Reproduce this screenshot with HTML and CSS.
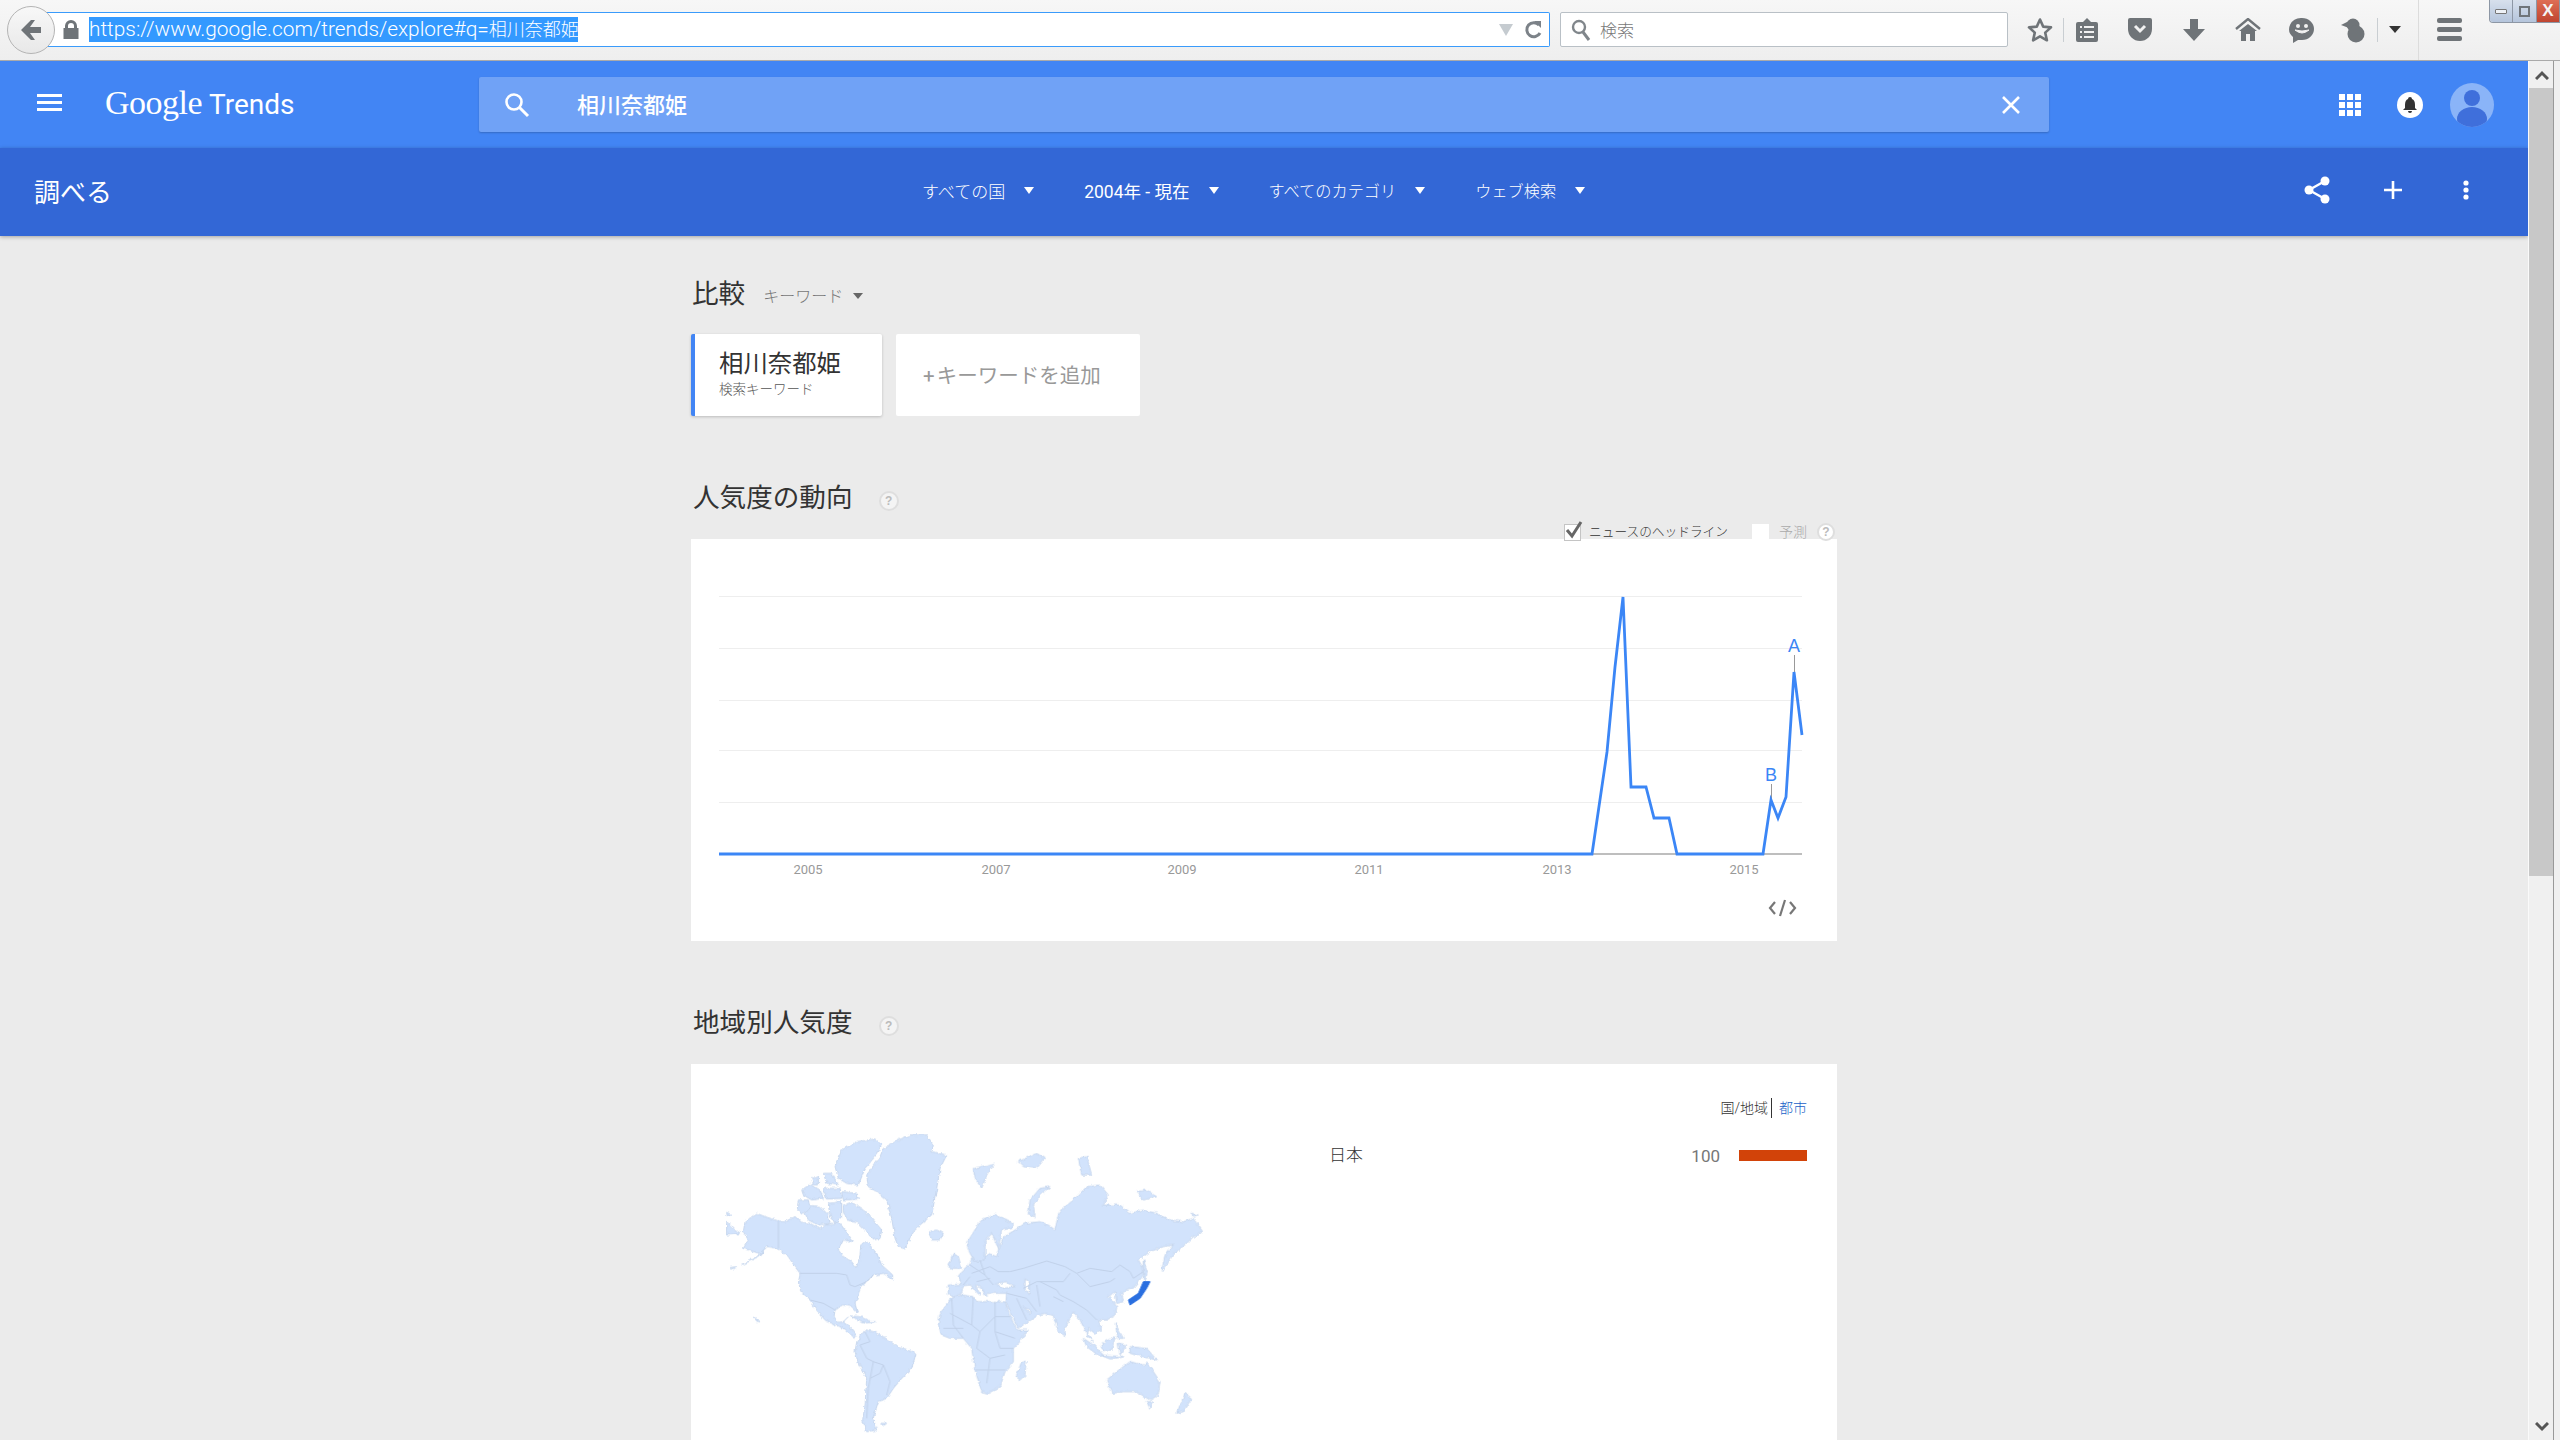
FILE: index.html
```html
<!DOCTYPE html>
<html>
<head>
    <title>Google Trends</title>
    <meta name="viewport" content="width=device-width, initial-scale=1.0">
    <link rel="stylesheet" href="styles.css">
</head>
<body>
    <div class="browser-bar">
        <div class="back-btn">
            <svg width="24" height="24" viewBox="0 0 24 24"><path d="M2 12 L12 2 L16 2 L11 9 L22 9 L22 15 L11 15 L16 22 L12 22 Z" fill="#6f7478"/></svg>
        </div>
        <div class="address-bar">
            <svg class="lock" width="18" height="20" viewBox="0 0 18 20"><path d="M3 8V6a6 6 0 0 1 12 0v2h1.5v11h-15V8Zm3 0h6V6a3 3 0 0 0-6 0Z" fill="#6f7478"/></svg>
            <span class="url">https://www.google.com/trends/explore#q=<span class="url-cjk">相川奈都姫</span></span>
            <div class="address-end">
                <svg width="14" height="12" viewBox="0 0 14 12"><path d="M0 0H14L7 12Z" fill="#c5cbd0"/></svg>
                <svg width="18" height="20" viewBox="0 0 18 20"><path d="M15 5A7 7 0 1 0 16 13" fill="none" stroke="#7c8288" stroke-width="3"/><path d="M10 1H17V8Z" fill="#7c8288"/></svg>
            </div>
        </div>
        <div class="browser-search">
            <svg width="20" height="22" viewBox="0 0 20 22"><circle cx="8" cy="8" r="6" fill="none" stroke="#80868b" stroke-width="2.4"/><path d="M12 13L18 21" stroke="#80868b" stroke-width="3"/></svg>
            <span>検索</span>
        </div>
        <div class="tools">
            <div class="tool tool-star">
                <svg width="26" height="26" viewBox="0 0 26 26"><path d="M13 2.5L16.2 9.6L24 10.4L18.2 15.6L19.9 23.3L13 19.3L6.1 23.3L7.8 15.6L2 10.4L9.8 9.6Z" fill="none" stroke="#6f7478" stroke-width="2.6" stroke-linejoin="round"/></svg>
            </div>
            <div class="tool-sep"></div>
            <div class="tool tool-clip">
                <svg width="24" height="26" viewBox="0 0 24 26"><path d="M3 5H8L12 1L16 5H21Q23 5 23 7V23Q23 25 21 25H3Q1 25 1 23V7Q1 5 3 5Z" fill="#6f7478"/><path d="M5 10H7M5 15H7M5 20H7M9 10H19M9 15H19M9 20H19" stroke="#f1f1f1" stroke-width="2"/></svg>
            </div>
            <div class="tool">
                <svg width="26" height="25" viewBox="0 0 26 25"><path d="M3 1H23Q25 1 25 3V12A12 12 0 0 1 1 12V3Q1 1 3 1Z" fill="#6f7478"/><path d="M8 9L13 14L18 9" fill="none" stroke="#f1f1f1" stroke-width="3"/></svg>
            </div>
            <div class="tool">
                <svg width="22" height="24" viewBox="0 0 22 24"><path d="M7 1H15V11H22L11 23L0 11H7Z" fill="#6f7478"/></svg>
            </div>
            <div class="tool">
                <svg width="26" height="24" viewBox="0 0 26 24"><path d="M1 11L13 1L25 11" fill="none" stroke="#6f7478" stroke-width="2.4"/><path d="M13 6L22 13H20V23H15V16H11V23H6V13H4Z" fill="#6f7478"/></svg>
            </div>
            <div class="tool">
                <svg width="26" height="26" viewBox="0 0 26 26"><path d="M13 1A12 11 0 0 1 13 23H9L4 26V20A12 11 0 0 1 13 1Z" fill="#6f7478"/><circle cx="9" cy="9" r="2" fill="#f1f1f1"/><circle cx="17" cy="9" r="2" fill="#f1f1f1"/><path d="M6 13Q13 19 20 13Q13 15 6 13Z" fill="#f1f1f1" stroke="#f1f1f1"/></svg>
            </div>
            <div class="tool tool-bird">
                <svg width="26" height="26" viewBox="0 0 26 26"><circle cx="13" cy="8" r="6.5" fill="#6f7478"/><ellipse cx="16" cy="17" rx="8.5" ry="8.5" fill="#6f7478"/><path d="M1 8L9 4V11Z" fill="#6f7478"/></svg>
            </div>
            <div class="tool-sep"></div>
            <div class="tool tool-more"><div class="small-arrow"></div></div>
            <div class="tool-sep tool-sep-long"></div>
            <div class="tool tool-menu">
                <div class="menu-bar"></div>
                <div class="menu-bar"></div>
                <div class="menu-bar"></div>
            </div>
        </div>
    </div>

    <div class="window-btns">
        <div class="win-btn"><div class="win-min"></div></div>
        <div class="win-btn"><div class="win-max"></div></div>
        <div class="win-btn win-close">X</div>
    </div>

    <div class="page">
        <div class="main">
            <div class="top-header">
                <div class="hamburger"><span></span><span></span><span></span></div>
                <div class="logo"><span class="logo-google">Google</span> <span class="logo-trends">Trends</span></div>
                <div class="search-box">
                    <svg class="search-icon" width="26" height="26" viewBox="0 0 26 26"><circle cx="10" cy="10" r="7.5" fill="none" stroke="#fff" stroke-width="2.6"/><path d="M15.5 15.5L24 24" stroke="#fff" stroke-width="3"/></svg>
                    <span class="search-text">相川奈都姫</span>
                    <svg class="search-clear" width="20" height="20" viewBox="0 0 20 20"><path d="M2 2L18 18M18 2L2 18" stroke="#fff" stroke-width="2.6"/></svg>
                </div>
                <div class="header-right">
                    <svg class="apps-icon" width="22" height="22" viewBox="0 0 22 22"><path d="M0 0h6v6H0zM8 0h6v6H8zM16 0h6v6h-6zM0 8h6v6H0zM8 8h6v6H8zM16 8h6v6h-6zM0 16h6v6H0zM8 16h6v6H8zM16 16h6v6h-6z" fill="#fff"/></svg>
                    <div class="bell">
                        <svg width="14" height="16" viewBox="0 0 14 16"><path d="M7 0Q9 0 9 2Q12 3 12 8V11L14 13H0L2 11V8Q2 3 5 2Q5 0 7 0ZM5 14H9Q9 16 7 16Q5 16 5 14Z" fill="#333"/></svg>
                    </div>
                    <div class="avatar">
                        <svg width="44" height="44" viewBox="0 0 44 44"><circle cx="22" cy="15" r="8" fill="#3f6fdb"/><ellipse cx="22" cy="36" rx="15" ry="12" fill="#3f6fdb"/></svg>
                    </div>
                </div>
            </div>
            <div class="sub-header">
                <div class="sub-title">調べる</div>
                <div class="filters">
                    <div class="filter"><span>すべての国</span><i class="white-arrow"></i></div>
                    <div class="filter"><span class="filter-date">2004年 - 現在</span><i class="white-arrow"></i></div>
                    <div class="filter filter-tight"><span>すべてのカテゴリ</span><i class="white-arrow"></i></div>
                    <div class="filter filter-tight"><span>ウェブ検索</span><i class="white-arrow"></i></div>
                </div>
                <div class="sub-actions">
                    <svg class="share-icon" width="26" height="28" viewBox="0 0 26 28"><path d="M21 5L5 14L21 23" fill="none" stroke="#fff" stroke-width="2.4"/><circle cx="21" cy="5" r="4.5" fill="#fff"/><circle cx="5" cy="14" r="4.5" fill="#fff"/><circle cx="21" cy="23" r="4.5" fill="#fff"/></svg>
                    <svg width="18" height="18" viewBox="0 0 18 18"><path d="M9 0V18M0 9H18" stroke="#fff" stroke-width="2.6"/></svg>
                    <svg width="6" height="20" viewBox="0 0 6 20"><circle cx="3" cy="3" r="2.6" fill="#fff"/><circle cx="3" cy="10" r="2.6" fill="#fff"/><circle cx="3" cy="17" r="2.6" fill="#fff"/></svg>
                </div>
            </div>

            <div class="content">
                <div class="compare-head">
                    <h2>比較</h2>
                    <span class="compare-type">キーワード</span>
                    <i class="gray-arrow"></i>
                </div>
                <div class="term-cards">
                    <div class="term-card term-active">
                        <div class="term-name">相川奈都姫</div>
                        <div class="term-sub">検索キーワード</div>
                    </div>
                    <div class="term-card term-add">+ キーワードを追加</div>
                </div>

                <div class="section-head section-trend">
                    <h2>人気度の動向</h2>
                    <span class="help help-big">?</span>
                </div>
                <div class="legend">
                    <span class="check on">
                        <svg width="20" height="20" viewBox="0 0 20 20"><path d="M3 9L8 15L17 1" fill="none" stroke="#666" stroke-width="3"/></svg>
                    </span>
                    <span class="legend-text">ニュースのヘッドライン</span>
                    <span class="check off"></span>
                    <span class="legend-off">予測</span>
                    <span class="help">?</span>
                </div>
                <div class="card chart-card">
                    <svg class="chart" width="1146" height="402" viewBox="691 539 1146 402">
                        <g class="grid">
                            <path d="M719 596.5H1802M719 648.5H1802M719 700.5H1802M719 750.5H1802M719 802.5H1802"/>
                        </g>
                        <path class="axis" d="M719 854H1802"/>
                        <g class="years">
                            <text x="808" y="874">2005</text>
                            <text x="996" y="874">2007</text>
                            <text x="1182" y="874">2009</text>
                            <text x="1369" y="874">2011</text>
                            <text x="1557" y="874">2013</text>
                            <text x="1744" y="874">2015</text>
                        </g>
                        <path class="marker" d="M1794.5 655V672M1771.5 784V800"/>
                        <polyline class="trend" points="719,854 1592,854 1607,752 1615,667 1623,597 1631,787 1646,787 1654,818 1669,818 1677,854 1763,854 1771,800 1778,818 1786,797 1794,672 1802,735"/>
                        <text class="pin" x="1794" y="652">A</text>
                        <text class="pin" x="1771" y="781">B</text>
                        <path class="embed" d="M1775 902L1770 908L1775 914M1790 902L1795 908L1790 914M1785 900L1780 916"/>
                    </svg>
                </div>

                <div class="section-head section-geo">
                    <h2>地域別人気度</h2>
                    <span class="help help-big">?</span>
                </div>
                <div class="card map-card">
                    <svg class="world" width="510" height="315" viewBox="0 0 1530 945">
                        <defs>
                            <filter id="rough" x="-2%" y="-2%" width="104%" height="104%" color-interpolation-filters="sRGB">
                                <feTurbulence type="fractalNoise" baseFrequency="0.08" numOctaves="2" seed="4" result="noise"/>
                                <feDisplacementMap in="SourceGraphic" in2="noise" scale="12" xChannelSelector="R" yChannelSelector="G"/>
                            </filter>
                        </defs>
                        <g class="land" filter="url(#rough)">
                            <!-- americas -->
                            <path d="M50 290L75 315L92 325L50 330Z"/>
                            <path d="M50 262L62 268L52 274Z"/>
                            <path d="M105 290L140 265L165 275L205 288L225 290L255 275L275 292L300 295L330 312L345 300L370 298L385 290L395 302L412 325L430 350L400 345L385 375L400 395L425 410L440 430L450 390L452 360L470 350L500 385L515 420L548 450L548 462L520 445L490 450L470 470L450 490L440 525L435 535L442 562L425 545L400 540L375 555L372 575L385 592L402 590L415 600L440 632L430 636L405 612L380 602L345 585L320 555L300 525L275 505L265 475L270 445L255 425L235 395L205 370L170 365L150 385L125 378L100 370L115 345L100 320Z"/>
                            <path d="M95 420L140 395L165 375L150 392Z"/>
                            <path d="M60 428L80 425L75 431Z"/>
                            <path d="M400 240L425 232L460 255L490 285L515 315L510 340L490 345L470 320L440 290L410 285L400 260Z"/>
                            <path d="M290 240L330 245L355 270L360 295L325 300L295 285L285 265Z"/>
                            <path d="M265 225L295 225L300 250L275 268L262 250Z"/>
                            <path d="M355 235L395 230L395 275L375 295L360 270Z"/>
                            <path d="M275 195L300 178L330 195L340 220L305 225L280 210Z"/>
                            <path d="M340 190L390 190L395 220L350 222Z"/>
                            <path d="M395 200L440 205L445 222L400 225Z"/>
                            <path d="M375 125L395 75L440 50L495 42L515 60L490 100L465 130L445 180L410 175L385 160Z"/>
                            <path d="M340 145L365 145L385 180L350 175Z"/>
                            <path d="M305 160L325 152L325 180L310 180Z"/>
                            <path d="M470 150L510 95L520 70L565 45L600 30L650 30L670 60L665 80L710 90L690 130L680 190L665 270L630 300L610 320L585 372L565 365L555 340L545 280L530 225L500 200L475 185Z"/>
                            <path d="M655 320L680 315L700 325L690 345L665 345Z"/>
                            <path d="M422 573L450 575L482 590L496 590L470 594L440 582Z"/>
                            <path d="M130 575L150 590L140 588Z"/>
                            <path d="M440 650L465 615L490 620L520 635L555 660L580 670L618 685L605 730L575 760L550 790L530 820L505 830L490 875L495 900L500 915L470 920L458 885L465 840L470 760L445 715L435 680Z"/>
                            <path d="M510 895L530 895L520 902Z"/>
                            <!-- europe, asia, africa -->
                            <g transform="translate(660 0)">
                                <path d="M55 510L55 480L95 478L85 452L118 420L125 398L150 405L175 385L200 395L205 375L222 335L255 315L285 295L330 290L355 300L375 315L385 270L400 250L430 225L470 185L510 180L535 210L520 240L570 240L600 265L640 255L680 265L720 285L760 290L790 280L818 320L790 335L770 355L745 375L725 395L698 440L696 432L705 390L730 360L700 365L660 380L625 405L640 430L640 450L610 490L590 495L575 505L580 530L560 535L555 500L535 515L560 545L555 570L530 585L505 585L515 615L495 625L475 610L472 632L490 652L468 620L450 585L430 560L405 610L405 635L385 620L370 570L345 565L325 570L295 590L265 610L245 570L228 530L230 505L190 505L165 510L158 490L135 480L152 510L140 505L122 480L100 482L95 505L75 515Z"/>
                                <path d="M110 355L150 290L195 268L250 295L245 310L215 315L205 370L185 325L165 350L165 405L135 410L120 385Z"/>
                                <path d="M25 600L30 565L65 520L95 510L130 515L140 530L195 530L225 530L240 575L262 615L295 615L270 650L250 670L250 710L225 740L210 785L175 805L155 800L135 735L125 670L100 640L60 640L35 630Z"/>
                                <path d="M275 710L288 705L285 750L270 765L258 755Z"/>
                                <path d="M55 425L70 385L85 395L95 430L65 430Z"/>
                                <path d="M130 130L195 115L170 150L155 190L135 160Z"/>
                                <path d="M265 110L320 85L345 100L320 130L280 125Z"/>
                                <path d="M295 270L300 225L330 190L360 185L330 210L310 240L315 275Z"/>
                                <path d="M445 100L470 95L485 150L455 150Z"/>
                                <path d="M620 200L650 195L680 215L640 225Z"/>
                                <path d="M785 265L805 270L790 273Z"/>
                                <path d="M640 405L652 440L645 470L640 440Z"/>
                                <path d="M555 595L580 640L565 640Z"/>
                                <path d="M515 655L555 635L545 675L520 680Z"/>
                                <path d="M460 640L490 660L520 690L510 695L470 665Z"/>
                                <path d="M510 690L585 695L540 702Z"/>
                                <path d="M565 655L590 660L570 690Z"/>
                                <path d="M600 665L650 670L680 705L640 695L600 685Z"/>
                                <path d="M530 765L560 740L600 710L640 720L650 710L690 770L685 810L660 825L620 800L580 800L545 805Z"/>
                                <path d="M650 830L668 830L660 850Z"/>
                                <path d="M765 805L785 820L760 860L740 865Z"/>
                                <path class="water" d="M195 478L225 470L255 485L220 490Z"/>
                                <path class="water" d="M285 462L298 470L298 505L285 495Z"/>
                                <path class="water" d="M280 545L305 560L298 565Z"/>
                            </g>
                        </g>
                        <g class="borders">
                            <path d="M205 288V370M270 445H380L410 450L420 480L435 485L470 470L490 450M300 525L340 535L375 555M465 620L480 650L450 660L470 700L490 710L520 720L540 770L530 810M490 710L475 790L470 880M520 720L510 745L480 760M400 590L415 575"/>
                            <g transform="translate(660 0)">
                                <path d="M240 440L280 430L350 408L405 425L440 445L480 430L545 440L570 420L600 440L610 460L640 440M440 445L480 485L540 470L555 460M330 470L380 495L390 510L430 530L470 555L500 585M280 490L320 470L400 470L420 445M320 480L330 545M370 515L400 530M230 505L290 520L320 560M260 520L290 585M120 420L165 450L190 480M125 445L180 425L205 440L240 440M150 405L165 450M100 480L120 455M140 470L180 460"/>
                                <path d="M65 520L70 600L100 640M130 515L125 600L150 620M195 530V575L240 575M60 565L125 600M150 620L195 575L195 620L255 640M150 620L140 670L180 700L225 690M180 700L170 775M135 735L225 735M40 610L100 610M195 620L210 670L250 670"/>
                            </g>
                        </g>
                        <g transform="translate(660 0)">
                            <path class="japan" d="M595 525L625 505L640 470L660 470L650 490L630 520L600 540Z"/>
                        </g>
                    </svg>
                    <div class="region-panel">
                        <div class="region-toggle">
                            <span class="region-on">国/地域</span>
                            <span class="region-link">都市</span>
                        </div>
                        <div class="region-row">
                            <span class="region-name">日本</span>
                            <span class="region-val">100</span>
                            <div class="region-bar"></div>
                        </div>
                    </div>
                </div>
            </div>
        </div>
        <div class="scrollbar">
            <div class="scroll-btn"><svg width="14" height="10" viewBox="0 0 14 10"><path d="M1 9L7 3L13 9" fill="none" stroke="#555" stroke-width="3"/></svg></div>
            <div class="scroll-thumb"></div>
            <div class="scroll-track"></div>
            <div class="scroll-btn"><svg width="14" height="10" viewBox="0 0 14 10"><path d="M1 1L7 7L13 1" fill="none" stroke="#555" stroke-width="3"/></svg></div>
        </div>
    </div>
</body>
</html>
```

FILE: styles.css
```css
* {
    margin: 0;
    padding: 0;
    box-sizing: border-box;
}

html, body {
    width: 100%;
    height: 100%;
    overflow: hidden;
}

body {
    display: flex;
    flex-direction: column;
    font-family: Roboto, 'Noto Sans CJK JP', sans-serif;
    background: #ebebeb;
    position: relative;
}

/* browser chrome */
.browser-bar {
    height: 61px;
    flex: none;
    display: flex;
    align-items: center;
    padding: 0 0 1px 7px;
    background: linear-gradient(#f7f7f7, #eeeeee);
    border-bottom: 1px solid #aaa;
}

.back-btn {
    width: 48px;
    height: 48px;
    flex: none;
    display: flex;
    align-items: center;
    justify-content: center;
    border-radius: 50%;
    border: 1px solid #b4b4b4;
    background: linear-gradient(#f8f8f8, #e8e8e8);
    position: relative;
    z-index: 1;
}

.address-bar {
    width: 1504px;
    height: 35px;
    margin-left: -9px;
    display: flex;
    align-items: center;
    padding-left: 15px;
    background: #fff;
    border: 1px solid #3a9bfb;
    border-left: none;
    border-radius: 0 2px 2px 0;
}

.lock {
    margin: 0 9px 0 1px;
}

.url {
    font-family: Roboto, 'Noto Sans CJK JP', sans-serif;
    font-size: 20.8px;
    font-weight: 300;
    line-height: 24px;
    color: #fff;
    background: #3399ff;
    white-space: nowrap;
    width: 489px;
    overflow: hidden;
}

.url-cjk {
    font-size: 18px;
}

.address-end {
    margin-left: auto;
    display: flex;
    align-items: center;
    gap: 11px;
    padding-right: 7px;
}

.browser-search {
    width: 448px;
    height: 35px;
    margin-left: 10px;
    display: flex;
    align-items: center;
    gap: 9px;
    padding-left: 10px;
    background: #fff;
    border: 1px solid #b9c0c6;
    border-radius: 2px;
    font-family: 'Noto Sans CJK JP', sans-serif;
    font-size: 17px;
    font-weight: 300;
    color: #777;
}

.tools {
    display: flex;
    align-items: center;
    margin-left: 9px;
}

.tool {
    width: 54px;
    height: 40px;
    display: flex;
    align-items: center;
    justify-content: center;
}

.tool-star {
    width: 46px;
}

.tool-clip {
    width: 46px;
    margin-right: 3px;
}

.tool-bird {
    width: 48px;
}

.tool-more {
    width: 34px;
}

.tool-menu {
    width: 60px;
    flex-direction: column;
    gap: 4px;
}

.tool-sep {
    width: 1px;
    height: 24px;
    background: #c9ced2;
}

.tool-sep-long {
    height: 60px;
    margin-left: 6px;
    background: #dcdcdc;
}

.menu-bar {
    width: 25px;
    height: 5px;
    border-radius: 2px;
    background: #6f7478;
}

.small-arrow {
    border-left: 6px solid transparent;
    border-right: 6px solid transparent;
    border-top: 7px solid #333;
}

.window-btns {
    position: absolute;
    top: 0;
    right: 0;
    width: 71px;
    height: 23px;
    display: flex;
    border: 1px solid #8d97a5;
    border-top: none;
    border-radius: 0 0 0 4px;
    overflow: hidden;
}

.win-btn {
    flex: 1;
    display: flex;
    align-items: center;
    justify-content: center;
    background: linear-gradient(#d7e0ec, #b5c5dc);
    border-right: 1px solid #8d97a5;
}

.win-min {
    width: 12px;
    height: 5px;
    background: #eef2f7;
    border: 1px solid #777;
    border-radius: 1px;
}

.win-max {
    width: 11px;
    height: 11px;
    border: 2px solid #70757a;
}

.win-close {
    font-family: 'Liberation Sans', sans-serif;
    font-size: 17px;
    font-weight: 700;
    color: #f4f4f4;
    background: linear-gradient(#de6e55, #bf4530);
    border-right: none;
}

/* page under the chrome */
.page {
    flex: 1;
    display: flex;
    min-height: 0;
}

.main {
    flex: 1;
    min-width: 0;
    overflow: hidden;
}

.top-header {
    height: 87px;
    display: flex;
    align-items: center;
    background: #4285f4;
    color: #fff;
    position: relative;
}

.hamburger {
    width: 25px;
    margin-left: 37px;
    display: flex;
    flex-direction: column;
    gap: 4px;
    margin-bottom: 5px;
}

.hamburger span {
    display: block;
    height: 3px;
    background: #fff;
}

.logo {
    margin-left: 43px;
    margin-bottom: 3px;
    width: 374px;
    display: flex;
    align-items: baseline;
    gap: 7px;
}

.logo-google {
    font-family: 'Liberation Serif', serif;
    font-size: 34px;
    letter-spacing: -0.5px;
}

.logo-trends {
    font-family: Roboto, sans-serif;
    font-size: 28px;
    font-weight: 400;
}

.search-box {
    width: 1570px;
    height: 55px;
    display: flex;
    align-items: center;
    background: #70a2f6;
    border-radius: 2px;
    box-shadow: 0 1px 2px rgba(0,0,0,0.2);
    font-family: 'Noto Sans CJK JP', sans-serif;
}

.search-icon {
    margin-left: 25px;
}

.search-text {
    margin-left: 47px;
    margin-bottom: 3px;
    font-size: 22px;
    font-weight: 500;
    color: #fff;
}

.search-clear {
    margin-left: auto;
    margin-right: 28px;
}

.header-right {
    margin-left: auto;
    display: flex;
    align-items: center;
    padding-right: 34px;
}

.apps-icon {
    margin-right: 36px;
}

.bell {
    width: 26px;
    height: 26px;
    border-radius: 50%;
    background: #fff;
    display: flex;
    align-items: center;
    justify-content: center;
    margin-right: 27px;
}

.avatar {
    width: 44px;
    height: 44px;
    border-radius: 50%;
    background: #8ab4f8;
    overflow: hidden;
}

.sub-header {
    height: 88px;
    padding-bottom: 4px;
    display: flex;
    align-items: center;
    background: #3367d6;
    color: #fff;
    box-shadow: 0 1px 4px rgba(0,0,0,0.3);
    position: relative;
    font-family: Roboto, 'Noto Sans CJK JP', sans-serif;
}

.sub-title {
    margin-left: 34px;
    width: 888px;
    font-size: 26px;
    font-weight: 400;
}

.filters {
    display: flex;
    align-items: center;
    font-size: 17px;
    font-weight: 300;
}

.filter {
    display: flex;
    align-items: center;
    gap: 19px;
    margin-right: 50px;
}

.filter-date {
    font-size: 17.5px;
    font-weight: 400;
}

.filter-tight {
    font-size: 16.2px;
}

.white-arrow {
    border-left: 5px solid transparent;
    border-right: 5px solid transparent;
    border-top: 7px solid #fff;
}

.sub-actions {
    margin-left: auto;
    display: flex;
    align-items: center;
    gap: 61px;
    padding-right: 59px;
}

.share-icon {
    margin-right: -7px;
}

/* content column */
.content {
    width: 1146px;
    margin: 0 auto;
    padding-top: 38px;
}

h2 {
    font-size: 26.6px;
    font-weight: 400;
    line-height: 36px;
    color: #333;
    font-family: 'Noto Sans CJK JP', sans-serif;
}

.compare-head {
    display: flex;
    align-items: center;
    height: 36px;
    padding-left: 1px;
}

.compare-type {
    margin-left: 18px;
    margin-top: 5px;
    font-size: 16px;
    font-weight: 300;
    color: #777;
}

.gray-arrow {
    margin-left: 10px;
    margin-top: 7px;
    border-left: 5px solid transparent;
    border-right: 5px solid transparent;
    border-top: 6px solid #666;
}

.term-cards {
    display: flex;
    gap: 14px;
    margin-top: 24px;
}

.term-card {
    height: 82px;
    background: #fff;
    border-radius: 2px;
}

.term-active {
    width: 191px;
    padding: 13px 0 0 24px;
    border-left: 4px solid #4285f4;
    box-shadow: 0 1px 3px rgba(0,0,0,0.2);
}

.term-name {
    font-size: 24.4px;
    line-height: 30px;
    font-weight: 400;
    color: #333;
    font-family: 'Noto Sans CJK JP', sans-serif;
}

.term-sub {
    font-size: 13.5px;
    line-height: 20px;
    font-weight: 300;
    color: #555;
    margin-top: 2px;
}

.term-add {
    width: 244px;
    display: flex;
    align-items: center;
    padding: 0 0 3px 27px;
    font-size: 20.5px;
    word-spacing: -3px;
    color: #999;
}

.section-head {
    display: flex;
    align-items: center;
    padding-left: 2px;
    height: 36px;
}

.section-head h2 {
    padding-bottom: 4px;
}

.section-trend {
    margin-top: 64px;
}

.section-geo {
    margin-top: 64px;
}

.help {
    width: 18px;
    height: 18px;
    border-radius: 50%;
    display: flex;
    align-items: center;
    justify-content: center;
    background: #fff;
    border: 2px solid #dedede;
    font-family: 'Liberation Sans', sans-serif;
    font-size: 12px;
    font-weight: 700;
    color: #bbb;
}

.help-big {
    width: 20px;
    height: 20px;
    margin-left: 26px;
    margin-top: 6px;
    background: #f4f4f4;
}

.legend {
    height: 20px;
    margin-top: 6px;
    margin-bottom: -3px;
    display: flex;
    align-items: center;
    justify-content: flex-end;
    padding-right: 2px;
    position: relative;
    z-index: 1;
}

.check {
    width: 17px;
    height: 17px;
    display: block;
    position: relative;
}

.check.on {
    background: #fff;
    border: 1px solid #c4c4c4;
}

.check.on svg {
    position: absolute;
    top: -4px;
    left: -1px;
}

.check.off {
    background: #fff;
    margin-left: 24px;
}

.legend-text {
    margin-left: 8px;
    margin-bottom: 3px;
    font-size: 12.7px;
    font-weight: 300;
    color: #333;
}

.legend-off {
    margin-left: 10px;
    margin-right: 10px;
    margin-bottom: 3px;
    font-size: 14px;
    font-weight: 300;
    color: #aaa;
}

.card {
    background: #fff;
}

.chart-card {
    height: 402px;
}

.chart {
    display: block;
}

.grid path {
    fill: none;
    stroke: #eee;
    stroke-width: 1.2;
}

.axis {
    stroke: #a8a8a8;
    stroke-width: 1.5;
}

.years text {
    font-family: Roboto, 'Liberation Sans', sans-serif;
    font-size: 13px;
    fill: #999;
    text-anchor: middle;
}

.marker {
    stroke: #999;
    stroke-width: 1;
}

.trend {
    fill: none;
    stroke: #3b86f6;
    stroke-width: 2.8;
}

.pin {
    font-family: 'Liberation Sans', sans-serif;
    font-size: 18px;
    fill: #3b86f6;
    text-anchor: middle;
}

.embed {
    fill: none;
    stroke: #777;
    stroke-width: 2.2;
}

.map-card {
    display: flex;
    align-items: flex-start;
    height: 500px;
    margin-top: 23px;
    padding: 61px 30px 0 19px;
}

.world {
    flex: none;
}

.land path {
    fill: #d2e3fc;
    stroke: #c6d6ed;
    stroke-width: 3;
    stroke-linejoin: round;
}

.land path.water {
    fill: #fff;
    stroke: #c6d6ed;
}

.japan {
    fill: #2a6fe0;
    stroke: #2a6fe0;
    stroke-width: 3;
}

.borders path {
    fill: none;
    stroke: #c1d1e9;
    stroke-width: 3;
}

.region-panel {
    flex: 1;
    margin-left: 109px;
    margin-top: -27px;
}

.region-toggle {
    display: flex;
    justify-content: flex-end;
    font-size: 14px;
    font-weight: 300;
    line-height: 20px;
}

.region-on {
    color: #333;
    padding-right: 3px;
    border-right: 1px solid #333;
}

.region-link {
    color: #1a5fc8;
    margin-left: 7px;
}

.region-row {
    display: flex;
    align-items: center;
    margin-top: 27px;
}

.region-name {
    font-size: 17px;
    font-weight: 300;
    color: #333;
    margin-top: -4px;
}

.region-val {
    margin-left: auto;
    font-size: 17px;
    color: #777;
}

.region-bar {
    width: 68px;
    height: 11px;
    margin-left: 19px;
    background: #d24309;
}

/* page scrollbar */
.scrollbar {
    width: 32px;
    flex: none;
    display: flex;
    flex-direction: column;
    background: #f0f0f0;
    border-left: 1px solid #fafafa;
    border-right: 6px solid #f0f0f0;
    box-shadow: inset -1px 0 0 #999;
}

.scroll-btn {
    height: 27px;
    flex: none;
    display: flex;
    align-items: center;
    justify-content: center;
}

.scroll-thumb {
    height: 788px;
    flex: none;
    background: #c8c8c8;
    margin-right: 1px;
}

.scroll-track {
    flex: 1;
}
```
